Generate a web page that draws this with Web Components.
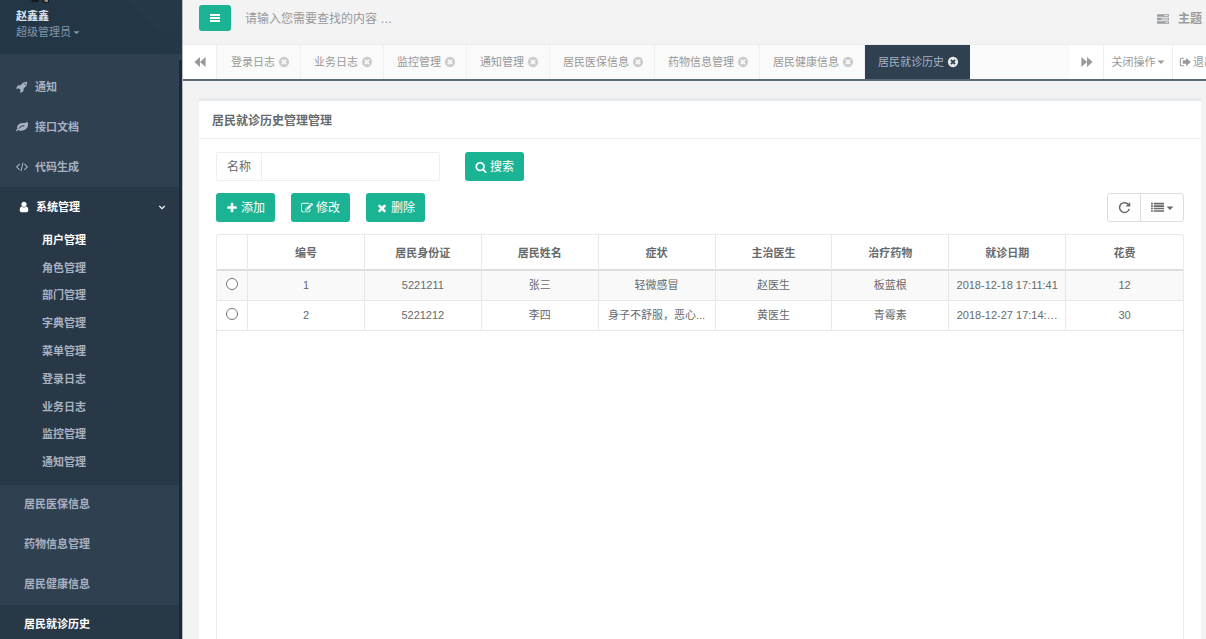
<!DOCTYPE html>
<html lang="zh-CN">
<head>
<meta charset="utf-8">
<title>居民就诊历史</title>
<style>
html,body{height:100%;margin:0}
body{font:11px/16px "Liberation Sans","Noto Sans CJK SC",sans-serif;color:#676a6c;background:#f3f3f4;overflow:hidden}
</style>
</head>
<body>
<admin-app>
  <side-bar slot="side" name="赵鑫鑫" role-name="超级管理员">
    <nav-item icon="rocket">通知</nav-item>
    <nav-item icon="leaf">接口文档</nav-item>
    <nav-item icon="code">代码生成</nav-item>
    <nav-group icon="user" label="系统管理">
      <sub-item active>用户管理</sub-item>
      <sub-item>角色管理</sub-item>
      <sub-item>部门管理</sub-item>
      <sub-item>字典管理</sub-item>
      <sub-item>菜单管理</sub-item>
      <sub-item>登录日志</sub-item>
      <sub-item>业务日志</sub-item>
      <sub-item>监控管理</sub-item>
      <sub-item>通知管理</sub-item>
    </nav-group>
    <nav-item plain>居民医保信息</nav-item>
    <nav-item plain>药物信息管理</nav-item>
    <nav-item plain>居民健康信息</nav-item>
    <nav-item plain active>居民就诊历史</nav-item>
  </side-bar>
  <top-bar></top-bar>
  <tab-strip>
    <tab-item>登录日志</tab-item>
    <tab-item>业务日志</tab-item>
    <tab-item>监控管理</tab-item>
    <tab-item>通知管理</tab-item>
    <tab-item>居民医保信息</tab-item>
    <tab-item>药物信息管理</tab-item>
    <tab-item>居民健康信息</tab-item>
    <tab-item active>居民就诊历史</tab-item>
  </tab-strip>
  <content-card heading="居民就诊历史管理管理">
    <search-form></search-form>
    <table-toolbar></table-toolbar>
    <record-table></record-table>
  </content-card>
</admin-app>

<script>
const ICONS = {
  rocket: '<path d="M1440 448q0-40-28-68t-68-28-68 28-28 68 28 68 68 28 68-28 28-68zm224-288q0 249-75.5 430.5t-253.5 360.5q-81 80-195 176l-20 379q-2 16-16 26l-384 224q-7 4-16 4-12 0-23-9l-64-64q-13-14-8-32l85-276-281-281-276 85q-3 1-9 1-14 0-23-9l-64-64q-17-19-5-39l224-384q10-14 26-16l379-20q96-114 176-195 188-187 358-258t431-71q14 0 24 9.500t10 22.500z"/>',
  leaf: '<path d="M1280 704q0-26-19-45t-45-19q-172 0-318 49.5t-259.5 134-235.5 219.5q-19 21-19 45 0 26 19 45t45 19q24 0 45-19 27-24 74-71t67-66q137-124 268.5-176t313.5-52q26 0 45-19t19-45zm512-198q0 95-20 193-46 224-184.500 383t-357.500 268q-214 108-438 108-148 0-286-47-15-5-88-42t-96-37q-16 0-39.500 32t-45 70-52.500 70-60 32q-43 0-63.500-17.500t-45.500-59.500q-2-4-6-11t-5.500-10-3-9.500-1.500-13.500q0-35 31-73.500t68-65.500 68-56 31-48q0-4-14-38t-16-44q-9-51-9-104 0-115 43.500-220t119-184.500 170.500-139 204-95.500q55-18 145-25.500t179.500-9 178.500-6 163.500-24 113.500-56.500l29.500-29.500 29.500-28 27-20 36.500-16 43.500-4.500q39 0 70.500 46t47.500 112 24 124 8 96z"/>',
  code: '<path fill="none" stroke="currentColor" stroke-width="150" d="M560 420L100 880l460 460M1232 420l460 460-460 460M1040 260L752 1500"/>',
  user: '<path d="M1536 1399q0 109-62.500 187t-150.500 78h-854q-88 0-150.500-78t-62.500-187q0-85 8.500-160.500t31.500-152 58.500-131 94-89 134.500-34.500q131 128 313 128t313-128q76 0 134.500 34.500t94 89 58.500 131 31.500 152 8.500 160.500zm-256-887q0 159-112.500 271.500t-271.500 112.500-271.500-112.500-112.500-271.500 112.500-271.500 271.500-112.500 271.500 112.500 112.500 271.500z"/>',
  down: '<path fill="none" stroke="currentColor" stroke-width="230" d="M400 700l496 496 496-496"/>',
  caret: '<path d="M128 560h1536l-768 800z"/>',
  bars: '<path d="M149 299h1494v298H149zM149 747h1494v298H149zM149 1195h1494v298H149z"/>',
  tasks: '<path fill-rule="evenodd" d="M0 192h1792v384H0zm1024 130v124h640V322zM0 704h1792v384H0zm640 130v124h1024V834zM0 1216h1792v384H0zm1280 130v124h384v-124z"/>',
  close: '<path d="M1277 1122q0-26-19-45l-181-181 181-181q19-19 19-45 0-27-19-46l-90-90q-19-19-46-19-26 0-45 19l-181 181-181-181q-19-19-45-19-27 0-46 19l-90 90q-19 19-19 46 0 26 19 45l181 181-181 181q-19 19-19 45 0 27 19 46l90 90q19 19 46 19 26 0 45-19l181-181 181 181q19 19 45 19 27 0 46-19l90-90q19-19 19-46zm387-226q0 209-103 385.500t-279.500 279.500-385.500 103-385.500-103-279.500-279.500-103-385.500 103-385.500 279.500-279.500 385.500-103 385.500 103 279.500 279.500 103 385.500z"/>',
  back: '<path d="M896 160v1472L64 896zM1728 160v1472L896 896z"/>',
  fwd: '<path d="M64 160v1472l832-736zM896 160v1472l832-736z"/>',
  exit: '<path fill="none" stroke="currentColor" stroke-width="160" d="M720 336H400q-200 0-200 200v720q0 200 200 200h320"/><path d="M1060 280l700 616-700 616v-370H560V650h500z"/>',
  search: '<path d="M1216 832q0-185-131.500-316.500t-316.500-131.500-316.500 131.500-131.500 316.500 131.500 316.500 316.500 131.500 316.500-131.500 131.500-316.500zm512 832q0 52-38 90t-90 38q-54 0-90-38l-343-342q-179 124-399 124-143 0-273.500-55.500t-225-150-150-225-55.500-273.500 55.500-273.500 150-225 225-150 273.500-55.500 273.500 55.500 225 150 150 225 55.500 273.500q0 220-124 399l343 343q37 37 37 90z"/>',
  plus: '<path d="M1600 736v192q0 40-28 68t-68 28h-416v416q0 40-28 68t-68 28h-192q-40 0-68-28t-28-68v-416h-416q-40 0-68-28t-28-68v-192q0-40 28-68t68-28h416v-416q0-40 28-68t68-28h192q40 0 68 28t28 68v416h416q40 0 68 28t28 68z"/>',
  times: '<path d="M1490 1322q0 40-28 68l-136 136q-28 28-68 28t-68-28l-294-294-294 294q-28 28-68 28t-68-28l-136-136q-28-28-28-68t28-68l294-294-294-294q-28-28-28-68t28-68l136-136q28-28 68-28t68 28l294 294 294-294q28-28 68-28t68 28l136 136q28 28 28 68t-28 68l-294 294 294 294q28 28 28 68z"/>',
  edit: '<path d="M888 1184l116-116-152-152-116 116v56h96v96h56zm440-720q-16-16-33 1l-350 350q-17 17-1 33t33-1l350-350q17-17 1-33zm80 594v190q0 119-84.500 203.500t-203.500 84.500h-832q-119 0-203.500-84.500t-84.500-203.500v-832q0-119 84.500-203.500t203.500-84.500h832q63 0 117 25 15 7 18 23 3 17-9 29l-49 49q-14 14-32 8-23-6-45-6h-832q-66 0-113 47t-47 113v832q0 66 47 113t113 47h832q66 0 113-47t47-113v-126q0-13 9-22l64-64q15-15 35-7t20 29zm-96-738l288 288-672 672h-288v-288zm444 132l-92 92-288-288 92-92q28-28 68-28t68 28l152 152q28 28 28 68t-28 68z"/>',
  refresh: '<path fill="none" stroke="currentColor" stroke-width="210" d="M1440 500A680 680 0 1 0 1550 1090"/><path d="M1690 130v640h-640z"/>',
  list: '<path d="M0 256h256v210H0zM380 256h1412v210H380zM0 600h256v210H0zM380 600h1412v210H380zM0 944h256v210H0zM380 944h1412v210H380zM0 1288h256v210H0zM380 1288h1412v210H380z"/>'
};

function define(name, render) {
  customElements.define(name, class extends HTMLElement {
    constructor() {
      super();
      this.attachShadow({mode: 'open'});
    }
    connectedCallback() {
      if (this.shadowRoot.childNodes.length) return;
      const t = document.createElement('template');
      t.innerHTML = '<style>*{box-sizing:border-box}a{color:inherit;text-decoration:none}button{font:inherit;color:inherit;margin:0;padding:0;border:0;background:none;cursor:pointer}</style>' + render(this);
      this.shadowRoot.append(t.content.cloneNode(true));
    }
  });
}

define('app-icon', el => `
<style>:host{display:inline-block;flex:none;width:12px;height:12px}svg{display:block;width:100%;height:100%}</style>
<svg viewBox="0 0 1792 1792" fill="currentColor" aria-hidden="true">${ICONS[el.getAttribute('name')]}</svg>`);

define('admin-app', () => `
<style>
:host{display:grid;grid-template-columns:183px minmax(0,1fr);height:100vh}
main{display:flex;flex-direction:column;min-width:0;min-height:0;overflow:hidden}
</style>
<slot name="side"></slot><main><slot></slot></main>`);

define('side-bar', el => `
<style>
:host{display:flex;flex-direction:column;min-height:0;overflow:hidden;background:#2f4050;color:#a7b1c2;border-right:1px solid #b4bac1}
header{position:relative;flex:none;height:54px;background:#233645;overflow:hidden}
.art{position:absolute;inset:0;width:100%;height:100%}
.who{position:relative;display:block;padding:8px 16px}
strong{display:block;color:#dfe4ed}
.role{display:flex;align-items:center;color:#8095a8;gap:2px}
.role app-icon{width:7px;height:7px}
.body{display:grid;grid-template-columns:minmax(0,1fr) 3px;flex:1;min-height:0}
nav{padding-top:13px;font-weight:bold}
.track{margin-top:6px;background:#1d2935}
</style>
<header>
<svg class="art" viewBox="0 0 182 54" preserveAspectRatio="none" aria-hidden="true">
<path fill="#253848" d="M126 0h56v20l-20 15z"/><path fill="#243746" d="M0 42l24-16 18 28H0zM162 35l20-15v34h-20z"/>
<path fill="#16181b" d="M31 0h8l-1 2h-6zM42 0h7v3h-5z"/><path fill="#a5876a" d="M44 0h4v2h-3z"/></svg>
<a class="who" href="#profile"><strong>${el.getAttribute('name')}</strong>
<span class="role">${el.getAttribute('role-name')}<app-icon name="caret"></app-icon></span></a>
</header>
<div class="body"><nav><slot></slot></nav><div class="track"></div></div>`);

define('nav-item', el => `
<style>
:host{display:block}
:host([active]){background:#293846;color:#fff}
a{display:flex;align-items:center;gap:7px;height:40px;padding:0 16px}
:host([plain]) a{padding:0 24px 2px}
</style>
<a href="#page">${el.hasAttribute('icon') ? `<app-icon name="${el.getAttribute('icon')}"></app-icon>` : ''}<slot></slot></a>`);

define('nav-group', el => `
<style>
:host{display:block;background:#293846;padding-bottom:9px}
button{display:flex;align-items:center;gap:6px;width:100%;height:39px;padding:0 12px 0 18px;color:#fff;font-weight:bold}
button span{flex:1;text-align:left}
.arrow{width:10px;height:10px}
.list{display:grid;grid-auto-rows:1fr;height:250px}
</style>
<button type="button" aria-expanded="true"><app-icon name="${el.getAttribute('icon')}"></app-icon><span>${el.getAttribute('label')}</span><app-icon class="arrow" name="down"></app-icon></button>
<div class="list"><slot></slot></div>`);

define('sub-item', () => `
<style>:host{display:flex;align-items:center;padding-left:42px}:host([active]){color:#fff}</style>
<a href="#page"><slot></slot></a>`);

define('top-bar', () => `
<style>
:host{display:flex;align-items:center;flex:none;height:45px;padding:0 4px 8px 16px;color:#999c9e;font-size:12px;border-bottom:1px solid #e9ebed;box-sizing:border-box}
.menu{display:flex;align-items:center;justify-content:center;width:32px;height:26px;background:#1ab394;color:#fff;border-radius:3px}
input{flex:1;min-width:0;height:26px;margin:0 14px;padding:2px 0 0;border:0;outline:0;background:none;font:inherit;color:inherit}
input::placeholder{color:#999;opacity:1}
.theme{display:flex;align-items:center;gap:9px;padding-top:2px;font-weight:bold}
</style>
<button class="menu" type="button" aria-label="菜单"><app-icon name="bars"></app-icon></button>
<input type="search" aria-label="查找" placeholder="请输入您需要查找的内容 …">
<a class="theme" href="#theme"><app-icon name="tasks"></app-icon>主题</a>`);

define('tab-strip', () => `
<style>
:host{display:flex;flex:none;height:36px;background:#fafafa;border-bottom:2px solid #5b6977;color:#999;box-sizing:border-box;overflow:hidden}
button{display:flex;align-items:center;justify-content:center;flex:none;background:#fff}
.arrow{width:34px;border-right:1px solid #eee}
.tabs{display:flex;flex:1;min-width:0;overflow:hidden;padding-left:1px}
.ops{width:69px;border-right:1px solid #eee;gap:1px}
.ops app-icon{width:8px;height:8px}
.quit{width:33px;padding-left:6px;gap:2px;justify-content:flex-start;white-space:nowrap;overflow:hidden}
</style>
<button class="arrow" type="button" aria-label="向左"><app-icon name="back"></app-icon></button>
<div class="tabs"><slot></slot></div>
<button class="arrow" type="button" aria-label="向右"><app-icon name="fwd"></app-icon></button>
<button class="ops" type="button">关闭操作<app-icon name="caret"></app-icon></button>
<button class="quit" type="button"><app-icon name="exit"></app-icon>退出</button>`);

define('tab-item', () => `
<style>
:host{display:flex;align-items:center;flex:none;gap:3px;padding:0 10px 0 13px;border-right:1px solid #f0f0f0;white-space:nowrap}
:host([active]){background:#2f4050;color:#a7b1c2;border-color:#2f4050}
button{display:flex;color:#ccc}
:host([active]) button{color:#e8e8e8}
</style>
<a href="#tab"><slot></slot></a><button type="button" aria-label="关闭"><app-icon name="close"></app-icon></button>`);

define('content-card', el => `
<style>
:host{display:flex;flex-direction:column;flex:1;min-height:0;margin:17px 5px 0 16px;border-top:3px solid #e7eaec;background:#fff}
h5{margin:0;padding:12px 13px 9px;font-size:12px;line-height:16px;border-bottom:1px solid #eee}
section{display:flex;flex-direction:column;flex:1;min-height:0;padding:13px 17px 0;gap:12px}
</style>
<h5>${el.getAttribute('heading')}</h5><section><slot></slot></section>`);

define('ui-button', el => `
<style>
:host{display:inline-flex;font-size:12px}
button{display:flex;align-items:center;gap:3px;height:29px;padding:0 10px;color:#fff;background:#1ab394;border-radius:3px;white-space:nowrap}
</style>
<button type="button"><app-icon name="${el.getAttribute('icon')}"></app-icon><slot></slot></button>`);

define('search-form', () => `
<style>
:host{display:flex;gap:25px;font-size:12px}
.group{display:flex;width:224px;height:29px;border:1px solid #eee;border-radius:2px}
label{display:flex;align-items:center;justify-content:center;width:45px;border-right:1px solid #eee}
input{flex:1;min-width:0;border:0;outline:0;padding:0 8px;font:inherit;color:inherit;background:none}
</style>
<div class="group"><label for="name">名称</label><input id="name" type="text"></div>
<ui-button icon="search">搜索</ui-button>`);

define('table-toolbar', () => `
<style>
:host{display:flex;gap:16px}
.tools{display:flex;margin-left:auto;height:29px;border:1px solid #ddd;border-radius:3px}
.tools button{display:flex;align-items:center;justify-content:center;gap:2px;width:32px}
.tools button + button{width:43px;border-left:1px solid #ddd}
app-icon{width:13px;height:13px}
.small{width:8px;height:8px}
</style>
<ui-button icon="plus">添加</ui-button>
<ui-button icon="edit">修改</ui-button>
<ui-button icon="times">删除</ui-button>
<div class="tools"><button type="button" aria-label="刷新"><app-icon name="refresh"></app-icon></button><button type="button" aria-label="列"><app-icon name="list"></app-icon><app-icon class="small" name="caret"></app-icon></button></div>`);

const HEAD = ['编号', '居民身份证', '居民姓名', '症状', '主治医生', '治疗药物', '就诊日期', '花费'];
const ROWS = [
  ['1', '5221211', '张三', '轻微感冒', '赵医生', '板蓝根', '2018-12-18 17:11:41', '12'],
  ['2', '5221212', '李四', '身子不舒服，恶心...', '黄医生', '青霉素', '2018-12-27 17:14:…', '30']
];
define('record-table', () => `
<style>
:host{display:block;flex:1;min-height:0;border:1px solid #eaeaea;border-bottom:0;border-radius:3px 3px 0 0}
table{width:100%;table-layout:fixed;border-collapse:separate;border-spacing:0}
th,td{padding:0 7px;text-align:center;border-right:1px solid #e7e7e7;white-space:nowrap;overflow:hidden}
th:last-child,td:last-child{border-right:0}
th{height:36px;padding-top:2px;border-bottom:2px solid #ddd}
td{height:30px;padding-bottom:2px;border-bottom:1px solid #e7e7e7}
tbody tr:first-child{background:#f9f9f9}
.pick{width:31px;padding:0}
input{display:block;appearance:none;width:12px;height:12px;margin:0 auto 4px;border:1px solid #777;border-radius:50%;background:#fff}
</style>
<table><thead><tr><th class="pick"></th>${HEAD.map(h => `<th>${h}</th>`).join('')}</tr></thead>
<tbody>${ROWS.map(r => `<tr><td class="pick"><input type="radio" name="row" aria-label="选择 ${r[0]}"></td>${r.map(c => `<td>${c}</td>`).join('')}</tr>`).join('')}</tbody></table>`);
</script>
</body>
</html>
